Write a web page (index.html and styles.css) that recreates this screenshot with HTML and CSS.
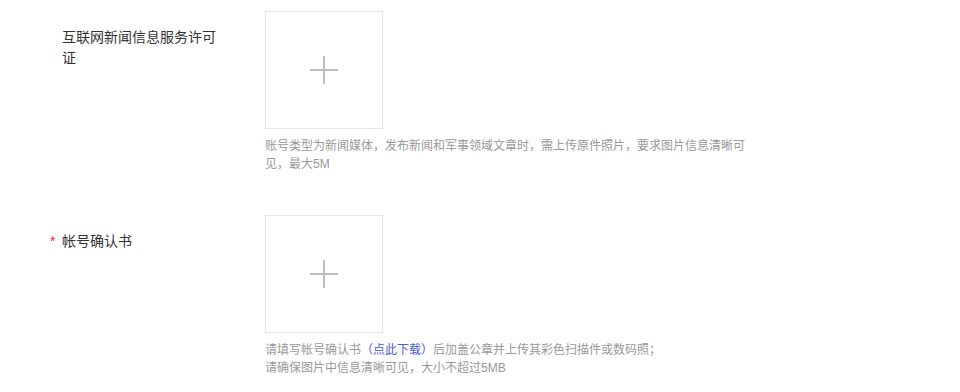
FILE: index.html
```html
<!DOCTYPE html>
<html lang="zh-CN">
<head>
    <meta charset="UTF-8">
    <title>资质上传</title>
    <link rel="stylesheet" href="styles.css">
</head>
<body>
    <div class="form">
        <div class="form-item">
            <div class="form-label">
                <span class="label-text">互联网新闻信息服务许可证</span>
            </div>
            <div class="form-control">
                <div class="upload-box">
                    <span class="plus"></span>
                </div>
                <p class="help">账号类型为新闻媒体，发布新闻和军事领域文章时，需上传原件照片，要求图片信息清晰可见，最大5M</p>
            </div>
        </div>

        <div class="form-item">
            <div class="form-label">
                <span class="label-text"><span class="required">*</span>帐号确认书</span>
            </div>
            <div class="form-control">
                <div class="upload-box">
                    <span class="plus"></span>
                </div>
                <p class="help">请填写帐号确认书<a href="#" class="link">（点此下载）</a>后加盖公章并上传其彩色扫描件或数码照；<br>请确保图片中信息清晰可见，大小不超过5MB</p>
            </div>
        </div>
    </div>
</body>
</html>
```

FILE: styles.css
```css
:root {
    --text-color: #333333;
    --help-color: #999999;
    --border-color: #e4e4ec;
    --plus-color: #bdbdbd;
    --required-color: #f5222d;
    --link-color: #4a5bd8;
}

body {
    margin: 0;
    background-color: #ffffff;
    font-family: "Liberation Sans", "Noto Sans CJK SC", sans-serif;
    color: var(--text-color);
}

.form {
    padding-top: 11px;
}

.form-item {
    display: flex;
    margin-bottom: 42px;
}

.form-item:last-child {
    margin-bottom: 0;
}

.form-label {
    width: 203px;
    padding-left: 62px;
    padding-top: 16px;
    box-sizing: content-box;
    flex-shrink: 0;
}

.label-text {
    display: block;
    width: 160px;
    font-size: 14px;
    line-height: 21px;
}

.required {
    display: inline-block;
    width: 12px;
    margin-left: -12px;
    color: var(--required-color);
}

.form-control {
    display: flex;
    flex-direction: column;
}

.upload-box {
    width: 116px;
    height: 116px;
    border: 1px solid var(--border-color);
    display: flex;
    align-items: center;
    justify-content: center;
}

.plus {
    position: relative;
    width: 28px;
    height: 28px;
}

.plus::before,
.plus::after {
    content: '';
    position: absolute;
    background-color: var(--plus-color);
}

.plus::before {
    left: 0;
    top: 13px;
    width: 28px;
    height: 2px;
}

.plus::after {
    left: 13px;
    top: 0;
    width: 2px;
    height: 28px;
}

.help {
    margin: 8px 0 0;
    width: 490px;
    font-size: 12px;
    line-height: 18px;
    color: var(--help-color);
}

.link {
    color: var(--link-color);
    text-decoration: none;
}
```
